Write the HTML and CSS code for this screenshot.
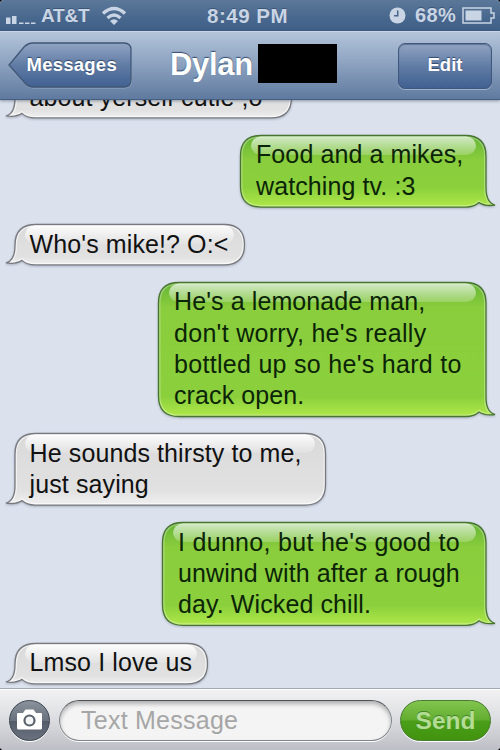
FILE: index.html
```html
<!DOCTYPE html>
<html lang="en">
<head>
<meta charset="utf-8">
<title>Messages</title>
<link rel="stylesheet" href="styles.css">
</head>
<body>
<div class="phone">
  <header class="status">
    <div class="carrier">
      <svg class="signal" width="30" height="10" viewBox="0 0 30 10"><path d="M0 2.500h4.500V9H0zM6 1h4.500v8H6zM13 7.500h4.500V9H13zM19 7.500h4.500V9H19zM25 7.500h4.500V9H25z"/></svg>
      <span class="network">AT&amp;T</span>
      <svg class="wifi" width="26" height="20" viewBox="0 0 26 20"><path d="M2 8.500Q13-1.500 24 8.500M6.500 13Q13 7 19.500 13" fill="none" stroke="#c9d5e4" stroke-width="3.400"/><path d="M9 16q4-3.500 8 0L13 20z"/></svg>
    </div>
    <span class="time">8:49 PM</span>
    <div class="power">
      <svg class="clock" width="17" height="17" viewBox="0 0 17 17"><circle cx="8.500" cy="8.500" r="8"/><path d="M8.700 3.500v5.300H5" fill="none" stroke="#49668a" stroke-width="1.600"/></svg>
      <span class="percent">68%</span>
      <svg class="battery" width="33" height="17" viewBox="0 0 33 17"><path d="M1 1h28v5h3v5h-3v5H1z" fill="none" stroke="#c9d5e4" stroke-width="1.500"/><path d="M3.500 3.500h16v10h-16z"/></svg>
    </div>
  </header>
  <nav class="nav">
    <a class="back">
      <svg width="126" height="48" viewBox="0 0 126 48">
        <defs><linearGradient id="btn" x1="0" y1="0" x2="0" y2="1"><stop offset="0" stop-color="#91a4c3"/><stop offset=".5" stop-color="#617ca5"/><stop offset="1" stop-color="#416192"/></linearGradient></defs>
        <path d="M25 2H116Q123.500 2 123.500 9V39Q123.500 46 116 46H25Q20 46 16 41L1.500 24 16 6Q20 2 25 2z" fill="none" stroke="#a9bcd6" stroke-opacity=".65"/>
        <path d="M25 1H116Q123 1 123 8V38Q123 45 116 45H25Q20 45 16 40L1 23 16 5Q20 1 25 1z" fill="url(#btn)" stroke="#405675" stroke-width="1.300"/>
      </svg>
      <span class="back-label">Messages</span>
    </a>
    <h1 class="title">Dylan</h1>
    <span class="redacted"></span>
    <a class="edit">Edit</a>
  </nav>
  <main class="chat">
    <div class="bubble in w-first">about yerself cutie ;o</div>
    <div class="bubble out w-food">Food and a mikes,<br>watching tv. :3</div>
    <div class="bubble in w-who">Who's mike!? O:&lt;</div>
    <div class="bubble out w-lemon">He's a lemonade man,<br><span class="loose">don't worry, he's really</span><br><span class="loose">bottled up so he's hard to</span><br>crack open.</div>
    <div class="bubble in w-thirsty">He sounds thirsty to me,<br>just saying</div>
    <div class="bubble out w-dunno"><span class="loose">I dunno, but he's good to</span><br>unwind with after a rough<br>day. Wicked chill.</div>
    <div class="bubble in w-love">Lmso I love us</div>
  </main>
  <footer class="composer">
    <span class="camera"><svg width="27" height="23" viewBox="0 0 27 23"><path d="M2 5h5l2.500-3.500h8L20 5h5q1 0 1 1v14q0 1.500-1.500 1.500h-22Q1 21.500 1 20V6q0-1 1-1z" fill="#fff"/><circle cx="13.500" cy="12.500" r="5" fill="#f4f5f7" stroke="#59616c" stroke-width="2.200"/></svg></span>
    <div class="field">Text Message</div>
    <span class="send">Send</span>
  </footer>
</div>
<script src="bubbles.js"></script>
</body>
</html>
```
FILE: styles.css
```css
* { box-sizing: border-box; }
body { margin: 0; background: #000; font-family: "Liberation Sans", Arial, sans-serif; }
.phone { width: 500px; height: 750px; display: flex; flex-direction: column; overflow: hidden; border-radius: 4px; background: #dbe1ed; }

.status { height: 31px; flex: none; display: flex; align-items: center; justify-content: space-between; position: relative; padding: 0 5px 0 6px; background: linear-gradient(#5b7899, #48678d 60%, #3f5f87); color: #c9d5e4; fill: #c9d5e4; font-weight: bold; font-size: 19px; text-shadow: 0 -1px 0 #3c5678; }
.carrier, .power { display: flex; align-items: center; }
.signal { margin-top: 8px; }
.network { margin-left: 5px; letter-spacing: -.2px; }
.wifi { margin-left: 12px; margin-top: -1px; }
.time { position: absolute; left: 207px; font-size: 20.500px; letter-spacing: .5px; white-space: nowrap; }
.clock { margin-right: 9px; margin-top: -1px; }
.percent { font-size: 20px; letter-spacing: .3px; margin-right: 6px; }

.nav { height: 69px; flex: none; display: flex; align-items: flex-start; position: relative; z-index: 2; padding: 11px 8px 0; background: linear-gradient(#b3c4da, #8aa0be 50%, #5f7a9f); border-top: 1px solid #c7d4e5; border-bottom: 1px solid #465f81; box-shadow: 0 1px 3px rgba(40,55,80,.45); color: #fff; font-weight: bold; text-shadow: 0 -1px 1px #324a6c; }
.back { position: relative; width: 126px; height: 48px; margin-top: -1px; }
.back svg { display: block; }
.back-label { position: absolute; left: 18.500px; top: 12px; font-size: 18.500px; line-height: 21px; letter-spacing: .25px; }
.title { margin: 4px 0 0 36px; width: 88px; font-size: 31px; line-height: 36px; letter-spacing: -.3px; }
.redacted { width: 79px; height: 39px; margin-top: 1px; background: #000; }
.edit { width: 94px; height: 46px; margin-left: 61px; border: 1px solid #40587c; border-radius: 7px; background: linear-gradient(#91a4c3, #617ca5 50%, #416192); box-shadow: 0 1px 0 rgba(180,198,222,.7), inset 0 1px 1px rgba(50,70,105,.5); text-align: center; font-size: 18.500px; line-height: 42px; }

.chat { flex: 1; min-height: 0; overflow: hidden; display: flex; flex-direction: column; gap: 16.500px; padding: 0 14px 0 15px; background: #dbe1ed; }
.bubble { position: relative; flex: none; z-index: 0; padding: 4.600px 0 5.600px 16px; font-size: 25px; line-height: 31.200px; letter-spacing: .1px; white-space: nowrap; color: #111; }
.in { align-self: flex-start; padding-left: 14.600px; }
.out { align-self: flex-end; color: #0b2408; }
.loose { letter-spacing: .3px; }
.shape { position: absolute; left: -12px; top: -2px; z-index: -1; overflow: visible; filter: drop-shadow(0 1px 1px rgba(60,70,90,.3)); }
.w-first { width: 277px; margin-top: -23px; }
.w-food { width: 246px; }
.w-who { width: 230px; }
.w-lemon { width: 328px; }
.w-thirsty { width: 311px; }
.w-dunno { width: 324px; }
.w-love { width: 193px; }

.composer { height: 62px; flex: none; display: flex; align-items: flex-start; position: relative; z-index: 2; padding: 11px 9px 0; background: linear-gradient(#f2f2f3, #dedfe2 45%, #bdbfc6); border-top: 1px solid #a3a9b5; box-shadow: inset 0 1px 0 #fff; }
.camera { width: 41px; height: 41px; display: flex; align-items: center; justify-content: center; border: 1px solid #3e4651; border-radius: 50%; background: linear-gradient(#8a929c, #68717d 50%, #535c68 52%, #69727e); box-shadow: 0 1px 0 #fff; }
.camera svg { margin-top: -2px; }
.field { width: 333px; height: 41px; margin-left: 9px; padding-left: 21px; border: 1px solid #7f8287; border-top-color: #4e5156; border-radius: 21px; background: #f4f4f4; box-shadow: inset 0 3px 4px rgba(0,0,0,.28), 0 1px 0 #fff; color: #a6a6a6; font-size: 25px; line-height: 38px; letter-spacing: .25px; }
.send { width: 91px; height: 41px; margin-left: 8px; border: 1px solid #477c31; border-radius: 21px; background: linear-gradient(#82c44f, #62ad30 49%, #4a9e18 51%, #42940f); box-shadow: 0 1px 0 #fff; color: #b3dc94; text-align: center; font-size: 24.500px; font-weight: bold; line-height: 39px; text-shadow: 0 -1px 0 #448425; }
```
FILE: bubbles.js
```js
// Draws each speech bubble behind its text, sized to the text box.
document.querySelectorAll('.bubble').forEach(function (el, i) {
  var w = el.offsetWidth, h = el.getBoundingClientRect().height, out = el.classList.contains('out');
  var d = 'M21 .5H' + (w - 21) + 'Q' + w + ' .5 ' + w + ' 21V' + (h - 20) +
    'C' + w + ' ' + (h - 9) + ' ' + (w + 3) + ' ' + (h - 4) + ' ' + (w + 9) + ' ' + (h - 2.5) +
    'Q' + (w - 1) + ' ' + (h - 1) + ' ' + (w - 7) + ' ' + (h - 5) +
    'Q' + (w - 12) + ' ' + (h - .5) + ' ' + (w - 20) + ' ' + (h - .5) +
    'H21Q.5 ' + (h - .5) + ' .5 ' + (h - 21) + 'V21Q.5 .5 21 .5z';
  var stops = out
    ? [[0, '#65b535'], [Math.min(.45, 25 / h), '#8acd3d'], [1 - 20 / h, '#8bd03c'], [1, '#afe849']]
    : [[0, '#d9d9da'], [.45, '#dededf'], [.8, '#e1e1e2'], [1, '#f0f0f0']];
  var flip = out ? '' : ' transform="translate(' + w + ' 0) scale(-1 1)"';
  el.insertAdjacentHTML('afterbegin',
    '<svg class="shape" width="' + (w + 24) + '" height="' + (h + 4) + '" viewBox="-12 -2 ' + (w + 24) + ' ' + (h + 4) + '">' +
    '<defs><linearGradient id="body' + i + '" x1="0" y1="0" x2="0" y2="1">' +
    stops.map(function (s) { return '<stop offset="' + s[0] + '" stop-color="' + s[1] + '"/>'; }).join('') +
    '</linearGradient><linearGradient id="gloss' + i + '" x1="0" y1="0" x2="0" y2="1">' +
    '<stop offset="0" stop-color="#fff" stop-opacity="' + (out ? .72 : .95) + '"/><stop offset="1" stop-color="#fff" stop-opacity="' + (out ? .2 : .12) + '"/></linearGradient>' +
    '<clipPath id="clip' + i + '"><path d="' + d + '"/></clipPath></defs><g' + flip + '>' +
    '<path d="' + d + '" fill="url(#body' + i + ')"/>' +
    '<path d="' + d + '" fill="none" stroke="#fff" stroke-opacity="' + (out ? .3 : .6) + '" stroke-width="4" clip-path="url(#clip' + i + ')"/>' +
    '<path d="' + d + '" fill="none" stroke="' + (out ? '#47752f' : '#77797e') + '" stroke-width="1.3"/>' +
    '<rect x="11" y="1.5" width="' + (w - 21) + '" height="18.5" rx="10" fill="url(#gloss' + i + ')"/></g></svg>');
});
```
